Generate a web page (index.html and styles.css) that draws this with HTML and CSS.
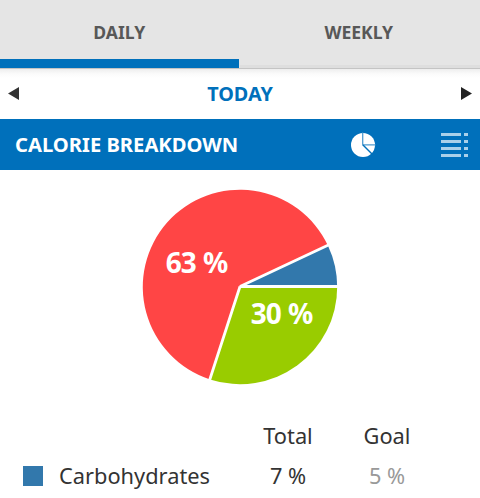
FILE: index.html
```html
<!DOCTYPE html>
<html lang="en">
<head>
<meta charset="utf-8">
<title>Calorie Breakdown</title>
<link rel="stylesheet" href="styles.css">
</head>
<body>
<div class="app">
  <nav class="tabs">
    <div class="tab tab-active"><span class="tab-label">DAILY</span></div>
    <div class="tab tab-weekly"><span class="tab-label">WEEKLY</span></div>
  </nav>
  <div class="date-row">
    <svg class="arrow" width="11" height="13" viewBox="0 0 11 13"><path d="M0 6.500 11 0V13Z" fill="#333"/></svg>
    <span class="date-label">TODAY</span>
    <svg class="arrow" width="11" height="13" viewBox="0 0 11 13"><path d="M11 6.500 0 0V13Z" fill="#222"/></svg>
  </div>
  <header class="section-head">
    <h1 class="section-title">CALORIE BREAKDOWN</h1>
    <svg class="icon-pie" width="26" height="26" viewBox="0 0 26 26">
      <circle cx="13" cy="13" r="12" fill="#fff"/>
      <path d="M12.700 0.500V12.800H25.500" fill="none" stroke="#4f9bd0" stroke-width="1.300"/>
      <path d="M13 13 22.500 22.500" fill="none" stroke="#0070bb" stroke-width="1.400"/>
    </svg>
    <svg class="icon-list" width="27" height="26" viewBox="0 0 27 26">
      <g fill="#a9d0ea">
        <rect x="0" y="0" width="20" height="3"/><rect x="23" y="0" width="4" height="3"/>
        <rect x="0" y="7" width="20" height="3"/><rect x="23" y="7" width="4" height="3"/>
        <rect x="0" y="14" width="20" height="3"/><rect x="23" y="14" width="4" height="3"/>
        <rect x="0" y="21" width="20" height="3"/><rect x="23" y="21" width="4" height="3"/>
      </g>
    </svg>
  </header>
  <div class="chart">
    <svg class="pie" width="200" height="200" viewBox="0 0 200 200">
      <path d="M100 100H197.200A97.200 97.200 0 0 0 188 58.700Z" fill="#3278ac"/>
      <path d="M100 100L188 58.700A97.200 97.200 0 1 0 70 192.400Z" fill="#ff4545"/>
      <path d="M100 100H197.200A97.200 97.200 0 0 1 70 192.400Z" fill="#99cc00"/>
      <path d="M198 99.500H100L190 57.200M100 99.500 69.300 194" fill="none" stroke="#fff" stroke-width="2.800"/>
      <text class="pie-label" x="56.500" y="85.700" text-anchor="middle">63 %</text>
      <text class="pie-label" x="141.500" y="137" text-anchor="middle">30 %</text>
    </svg>
  </div>
  <section class="legend">
    <div class="legend-row legend-head">
      <span class="col-name"></span>
      <span class="col-total">Total</span>
      <span class="col-goal">Goal</span>
    </div>
    <div class="legend-row">
      <span class="col-name"><i class="swatch"></i>Carbohydrates</span>
      <span class="col-total">7 %</span>
      <span class="col-goal goal-value">5 %</span>
    </div>
  </section>
</div>
</body>
</html>
```
FILE: styles.css
```css
* { box-sizing: border-box; }
html, body { margin: 0; padding: 0; background: #fff; }
body { width: 480px; height: 498px; overflow: hidden; font-family: "Noto Sans", "Open Sans", sans-serif; }
.app { display: flex; flex-direction: column; height: 498px; overflow: hidden; }

.tabs { display: flex; height: 69px; background: #e5e5e5; border-bottom: 1px solid #c4c4c4; }
.tab { flex: 1; display: flex; justify-content: center; padding-top: 21px; border-bottom: 3px solid #dedede; }
.tab-active { border-bottom: 9px solid #0070bb; margin-right: 1px; }
.tab-weekly { padding-right: 2px; }
.tab-label { font-size: 17.6px; line-height: 22px; font-weight: 700; color: #585858; }

.date-row { height: 50px; display: flex; align-items: center; justify-content: space-between; padding: 0 8px 1px; background: linear-gradient(#eeeeee 0, #fbfbfb 5px, #fff 9px); }
.date-label { font-size: 19.800px; font-weight: 700; color: #0070bb; line-height: 24px; }
.arrow { display: block; }

.section-head { height: 51px; background: #0070bb; display: flex; align-items: center; padding: 0 12px 0 15px; }
.section-title { margin: 0 0 2px; flex: 1; font-size: 20.200px; line-height: 26px; font-weight: 700; color: #fff; }
.icon-pie { margin-right: 65px; display: block; }
.icon-list { display: block; margin-top: 2px; }

.chart { display: flex; justify-content: center; padding-top: 17px; height: 240px; }
.pie { display: block; }
.pie-label { font-family: "Noto Sans", "Open Sans", sans-serif; font-size: 28px; letter-spacing: -1.200px; word-spacing: 1.500px; font-weight: 700; fill: #fff; }

.legend { padding-top: 11px; }
.legend-row { display: flex; align-items: center; height: 41px; font-size: 21.800px; color: #333; }
.legend-head { height: 29px; margin-bottom: 5px; }
.col-name { width: 240px; display: flex; align-items: center; padding-left: 23px; }
.col-total { width: 96px; text-align: center; }
.col-goal { width: 102px; text-align: center; }
.goal-value { color: #999; }
.swatch { display: block; width: 20px; height: 20px; margin-right: 16px; background: #3278ac; }
```
